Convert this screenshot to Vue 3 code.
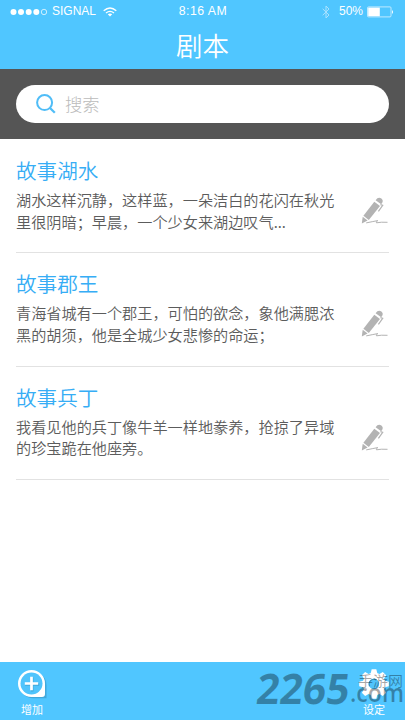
<script setup>
const stories = [
  { title: '故事湖水', lines: ['湖水这样沉静，这样蓝，一朵洁白的花闪在秋光', '里很阴暗；早晨，一个少女来湖边叹气...'] },
  { title: '故事郡王', lines: ['青海省城有一个郡王，可怕的欲念，象他满腮浓', '黑的胡须，他是全城少女悲惨的命运；'] },
  { title: '故事兵丁', lines: ['我看见他的兵丁像牛羊一样地豢养，抢掠了异域', '的珍宝跪在他座旁。'] },
]
</script>

<template>
  <div class="screen">
    <header class="header">
      <div class="status">
        <div class="side">
          <svg class="dots" width="38" height="8" viewBox="0 0 38 8">
            <g fill="#fff">
              <circle cx="3.5" cy="4" r="3" /><circle cx="11" cy="4" r="3" />
              <circle cx="18.7" cy="4" r="3" /><circle cx="26.3" cy="4" r="3" />
            </g>
            <circle cx="34" cy="4" r="2.7" fill="none" stroke="#fff" stroke-width=".7" />
          </svg>
          <span class="carrier">SIGNAL</span>
          <svg class="wifi" width="14" height="10" viewBox="0 0 14 10" fill="none" stroke="#fff" stroke-width="1.3">
            <path d="M.7 3.8Q7-1.8 13.3 3.8" />
            <path d="M3 6Q7 2.7 11 6" />
            <path d="M4.8 7.2Q7 5.8 9.2 7.2L7 9.5Z" fill="#fff" stroke="none" />
          </svg>
        </div>
        <span class="clock">8:16 AM</span>
        <div class="side right">
          <svg class="bluetooth" width="8" height="14" viewBox="0 0 8 14" fill="none" stroke="#a9e2ff" stroke-width="1">
            <path d="M.7 3.8 7 10 4 13V1l3 3L.7 10.2" />
          </svg>
          <span>50%</span>
          <svg class="battery" width="27" height="12" viewBox="0 0 27 12">
            <rect x=".5" y=".9" width="23.5" height="10" rx="1" fill="none" stroke="#d9f2ff" stroke-width=".8" />
            <rect x="1.2" y="1.6" width="11.6" height="8.6" fill="#fff" />
            <path d="M25 4q2 2 0 4z" fill="#fff" />
          </svg>
        </div>
      </div>
      <h1>剧本</h1>
    </header>

    <div class="search-band">
      <div class="search">
        <svg width="20" height="20" viewBox="0 0 20 20" fill="none" stroke="#50bdf7" stroke-width="2">
          <circle cx="8.6" cy="8.6" r="7.5" /><path d="m14 14 4.8 4.7" stroke-width="2.3" />
        </svg>
        <span>搜索</span>
      </div>
    </div>

    <main class="list">
      <article v-for="story in stories" :key="story.title" class="story">
        <div class="copy">
          <h2>{{ story.title }}</h2>
          <p v-for="line in story.lines" :key="line">{{ line }}</p>
        </div>
        <svg class="pen" width="28" height="28" viewBox="0 0 28 28" fill="#b3b3b3">
          <path d="M13.3 4.8 19 9 7.8 22.9 2.4 18.8Z" />
          <path d="M14.6 3.2Q17-.4 20.4 1.4 23.2 3.8 20.2 7.3Z" />
          <path d="m1.7 19.8 4.9 3.7-5.8 3Z" />
          <path d="m19.4 7.6 2.3.7-4.3 6" fill="none" stroke="#b3b3b3" stroke-width="1.2" />
          <path d="M5.2 25.9q6.2-1.3 11.6-2.3-2.4 1.5-1.3 2.2 4.3-.9 11-.5" fill="none" stroke="#b3b3b3" stroke-width="1" />
        </svg>
      </article>
    </main>

    <footer class="tabs">
      <div class="tab">
        <svg class="add" width="30" height="30" viewBox="0 0 30 30">
          <path d="M15 2A13 13 0 1 0 15 28H28.5V15A13 13 0 0 0 15 2Z" transform="translate(1 1.2)" fill="#358fbd" opacity=".55" />
          <path d="M14.5 1A13.5 13.5 0 1 0 14.5 28H25Q28 28 28 25V14.5A13.5 13.5 0 0 0 14.5 1Z" fill="#fff" />
          <circle cx="14.5" cy="14.5" r="11" fill="#50c4fc" />
          <path d="M15.2 8.5v14M8.2 15.5h14" stroke="#3797c4" stroke-width="2.5" opacity=".6" />
          <path d="M14.5 7.8v13.4M7.8 14.5h13.4" stroke="#fff" stroke-width="2.7" />
        </svg>
        <span>增加</span>
      </div>
      <div class="tab">
        <svg class="gear" width="32" height="32" viewBox="-16 -16 32 32">
          <g fill="#fff">
            <circle r="11.3" />
            <path v-for="n in 8" :key="n" d="M-3.5-10-2.3-14.8H2.3L3.5-10Z" :transform="`rotate(${n * 45})`" />
          </g>
          <circle r="5.2" fill="#50c4fc" />
          <path d="M-4.4 2.2A5 5 0 0 1 2.5-4.2" fill="none" stroke="#368fbb" stroke-width="1.3" />
        </svg>
        <span>设定</span>
      </div>
      <svg class="watermark" width="155" height="58" viewBox="0 0 155 58">
        <text class="mark-number" x="10" y="41.5" textLength="93" lengthAdjust="spacingAndGlyphs" transform="skewX(-7)">2265</text>
        <text class="mark-domain" x="100" y="39.5" textLength="54" lengthAdjust="spacingAndGlyphs">.com</text>
        <text class="mark-name" x="108" y="24" textLength="45" lengthAdjust="spacingAndGlyphs">手游网</text>
      </svg>
    </footer>
  </div>
</template>

<style>
body { margin: 0; }
</style>

<style scoped>
.screen {
  width: 405px;
  height: 720px;
  display: flex;
  flex-direction: column;
  overflow: hidden;
  background: #fff;
  font-family: "Noto Sans CJK SC", sans-serif;
  font-weight: 350;
}
.header { height: 69px; background: #50c6ff; color: #fff; }
.status {
  display: grid;
  grid-template-columns: 1fr auto 1fr;
  align-items: center;
  height: 23px;
  padding: 0 11px 0 10px;
  font: 400 12px/23px "Liberation Sans", sans-serif;
}
.side { display: flex; align-items: center; }
.right { justify-content: flex-end; }
.carrier { margin-left: 4px; font-size: 12px; }
.wifi { margin-left: 7px; }
.clock { font-size: 12.3px; letter-spacing: .5px; margin-left: 2px; }
.bluetooth { margin-right: 9px; }
.battery { margin-left: 4px; }
h1 { margin: 0; font-size: 26.5px; line-height: 44px; font-weight: 350; text-align: center; }
.search-band { height: 70px; box-sizing: border-box; padding: 16px; background: #555; }
.search {
  display: flex;
  align-items: center;
  height: 38px;
  box-sizing: border-box;
  padding-left: 20px;
  border-radius: 19px;
  background: #fff;
  color: #bbb;
  font-size: 17.3px;
  font-weight: 300;
}
.search span { margin-left: 9px; line-height: 36px; }
.list { flex: 1; padding: 1px 16px 0; }
.story {
  display: flex;
  justify-content: space-between;
  height: 113.3px;
  box-sizing: border-box;
  padding-top: 14px;
  border-bottom: 1px solid #e2e2e2;
}
h2 { margin: 0 0 3px; font-size: 20.6px; line-height: 32px; font-weight: 350; color: #36adf5; }
p { margin: 0; font-size: 15.17px; line-height: 21.7px; color: #5c5c5c; white-space: nowrap; }
.pen { margin: 43px 0 0; flex: none; }
.tabs {
  position: relative;
  display: flex;
  justify-content: space-between;
  height: 58px;
  box-sizing: border-box;
  padding: 6px 15px 0 16px;
  background: #50c6ff;
  color: #fff;
}
.tab { display: flex; flex-direction: column; align-items: center; width: 32px; font-size: 11px; line-height: 16px; }
.tab span { font-weight: 400; }
.add { margin: 1px 0 2px; }
.gear { margin-bottom: 1px; }
.watermark { position: absolute; left: 250px; top: 0; fill: rgba(0, 0, 0, .34); }
.mark-number { font: 700 42px "Open Sans", sans-serif; }
.mark-domain { font: 600 25px "Open Sans", sans-serif; }
.mark-name { font: 400 14px "Noto Sans CJK SC", sans-serif; }
</style>
